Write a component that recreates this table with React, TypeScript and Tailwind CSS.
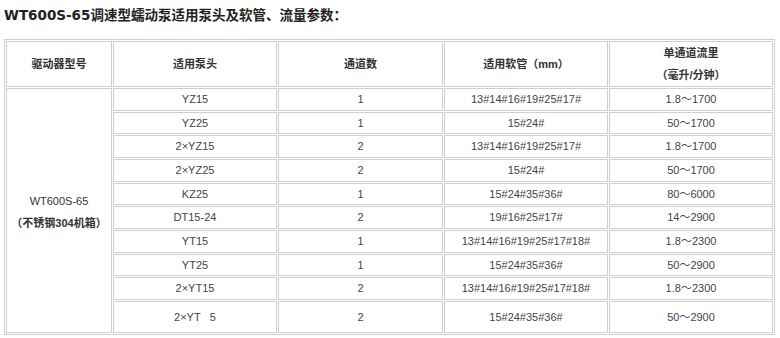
import React from "react";

const rows: [string, string, string, string][] = [
  ["YZ15", "1", "13#14#16#19#25#17#", "1.8～1700"],
  ["YZ25", "1", "15#24#", "50～1700"],
  ["2×YZ15", "2", "13#14#16#19#25#17#", "1.8～1700"],
  ["2×YZ25", "2", "15#24#", "50～1700"],
  ["KZ25", "1", "15#24#35#36#", "80～6000"],
  ["DT15-24", "2", "19#16#25#17#", "14～2900"],
  ["YT15", "1", "13#14#16#19#25#17#18#", "1.8～2300"],
  ["YT25", "1", "15#24#35#36#", "50～2900"],
  ["2×YT15", "2", "13#14#16#19#25#17#18#", "1.8～2300"],
  ["2×YT\u00a0\u00a0\u00a05", "2", "15#24#35#36#", "50～2900"],
];

const cell = "border border-[#cfcfcf] p-0 text-center align-middle";

export default function App() {
  return (
    <div
      className="w-[780px] h-[338px] bg-white text-[#333]"
      style={{ fontFamily: '"Liberation Sans", "Noto Sans CJK SC", sans-serif' }}
    >
      <div
        className="h-[30px] pl-[4px] text-[13.5px] font-bold leading-[30px] text-[#222]"
        style={{ fontFamily: '"DejaVu Sans", "Noto Sans CJK SC", sans-serif' }}
      >
        WT600S-65调速型蠕动泵适用泵头及软管、流量参数：
      </div>
      <table className="ml-[4px] mt-[9px] w-[771px] table-fixed border-separate border-spacing-[1px] border border-[#cfcfcf] text-[11px] text-[#444]">
        <colgroup>
          <col className="w-[106px]" />
          <col className="w-[164px]" />
          <col className="w-[165px]" />
          <col className="w-[164px]" />
          <col className="w-[164px]" />
        </colgroup>
        <tbody>
          <tr>
            <td className={`${cell} h-[43px] font-bold text-[#333]`}>驱动器型号</td>
            <td className={`${cell} h-[43px] font-bold text-[#333]`}>适用泵头</td>
            <td className={`${cell} h-[43px] font-bold text-[#333]`}>通道数</td>
            <td className={`${cell} h-[43px] font-bold text-[#333]`}>适用软管（mm）</td>
            <td className={`${cell} h-[43px] font-bold text-[#333] leading-[22px]`}>
              <div>单通道流里</div>
              <div>（毫升/分钟）</div>
            </td>
          </tr>
          {rows.map((r, i) => (
            <tr key={i}>
              {i === 0 && (
                <td rowSpan={10} className={`${cell} leading-[22px] text-[#333]`}>
                  <div className="pt-[3px]">WT600S-65</div>
                  <div className="font-bold">（不锈钢304机箱）</div>
                </td>
              )}
              <td className={`${cell} ${i === 9 ? "h-[32px]" : "h-[22.67px]"}`}>{r[0]}</td>
              <td className={cell}>{r[1]}</td>
              <td className={cell}>{r[2]}</td>
              <td className={cell}>{r[3]}</td>
            </tr>
          ))}
        </tbody>
      </table>
    </div>
  );
}
